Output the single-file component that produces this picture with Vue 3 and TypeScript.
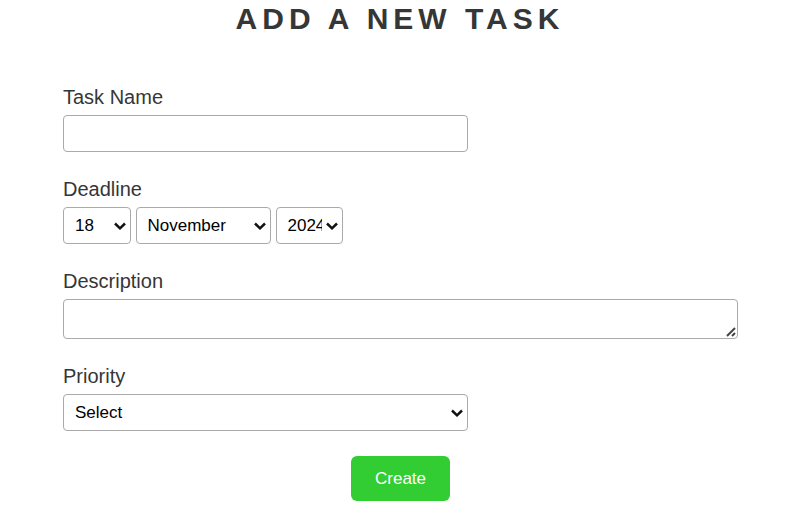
<script setup lang="ts">
import { ref } from 'vue'

const months: string[] = [
  'January', 'February', 'March', 'April', 'May', 'June',
  'July', 'August', 'September', 'October', 'November', 'December',
]
const years: number[] = [2024, 2025, 2026, 2027]

const name = ref('')
const day = ref(18)
const month = ref('November')
const year = ref(2024)
const description = ref('')
const priority = ref('')
</script>

<template>
  <main class="page">
    <h1>Add a new task</h1>
    <form @submit.prevent>
      <div class="field">
        <label for="name">Task Name</label>
        <input id="name" v-model="name" class="control half" type="text" />
      </div>
      <div class="field">
        <label for="day">Deadline</label>
        <div class="dates">
          <div class="picker short">
            <select id="day" v-model="day" class="control">
              <option v-for="d in 31" :key="d" :value="d">{{ d }}</option>
            </select>
            <svg class="chevron" viewBox="0 0 12 8" aria-hidden="true"><path d="M1 1.5 6 6.3 11 1.5" /></svg>
          </div>
          <div class="picker month">
            <select v-model="month" class="control" aria-label="Month">
              <option v-for="m in months" :key="m">{{ m }}</option>
            </select>
            <svg class="chevron" viewBox="0 0 12 8" aria-hidden="true"><path d="M1 1.5 6 6.3 11 1.5" /></svg>
          </div>
          <div class="picker short">
            <select v-model="year" class="control" aria-label="Year">
              <option v-for="y in years" :key="y" :value="y">{{ y }}</option>
            </select>
            <svg class="chevron" viewBox="0 0 12 8" aria-hidden="true"><path d="M1 1.5 6 6.3 11 1.5" /></svg>
          </div>
        </div>
      </div>
      <div class="field">
        <label for="description">Description</label>
        <div class="picker">
          <textarea id="description" v-model="description" class="control area" rows="1"></textarea>
          <svg class="grip" viewBox="0 0 10 10" aria-hidden="true"><path d="M1 9 9 1M6 9 9 6" /></svg>
        </div>
      </div>
      <div class="field">
        <label for="priority">Priority</label>
        <div class="picker half">
          <select id="priority" v-model="priority" class="control">
            <option value="">Select</option>
            <option>Low</option>
            <option>Medium</option>
            <option>High</option>
          </select>
          <svg class="chevron" viewBox="0 0 12 8" aria-hidden="true"><path d="M1 1.5 6 6.3 11 1.5" /></svg>
        </div>
      </div>
      <button type="submit">Create</button>
    </form>
  </main>
</template>

<style>
body {
  background: #fff;
}
</style>

<style scoped>
.page {
  padding-left: 5px;
  font-family: "Liberation Sans", Arial, sans-serif;
  color: #363636;
}
h1 {
  margin: 0;
  font-size: 30px;
  line-height: 38px;
  letter-spacing: 5px;
  text-align: center;
  text-transform: uppercase;
}
form {
  display: flex;
  flex-direction: column;
  gap: 25px;
  margin: 47px 57px 0 58px;
}
.field {
  display: flex;
  flex-direction: column;
  gap: 6px;
}
label {
  font-size: 20px;
  line-height: 24px;
}
.control {
  display: block;
  box-sizing: border-box;
  width: 100%;
  height: 37px;
  padding: 0 20px 0 11px;
  border: 1px solid #aaa;
  border-radius: 4px;
  background: #fff;
  color: #000;
  font-family: inherit;
  font-size: 17px;
}
select.control {
  appearance: none;
}
.picker {
  position: relative;
}
.half {
  width: 60%;
}
.dates {
  display: flex;
  gap: 5px;
}
.short {
  width: 10%;
}
.month {
  width: 20%;
}
.chevron {
  position: absolute;
  top: 15px;
  right: 5px;
  width: 12px;
  height: 8px;
  fill: none;
  stroke: #111;
  stroke-width: 2.5;
  pointer-events: none;
}
.area {
  height: 40px;
  padding: 8px 11px;
  resize: vertical;
}
.area::-webkit-resizer {
  display: none;
}
.grip {
  position: absolute;
  right: 2px;
  bottom: 2px;
  width: 10px;
  height: 10px;
  fill: none;
  stroke: #444;
  stroke-width: 2;
  pointer-events: none;
}
button {
  align-self: center;
  padding: 12px 24px;
  border: 0;
  border-radius: 6px;
  background: #32cd32;
  color: #fff;
  font-family: inherit;
  font-size: 17px;
  line-height: 21px;
}
</style>
